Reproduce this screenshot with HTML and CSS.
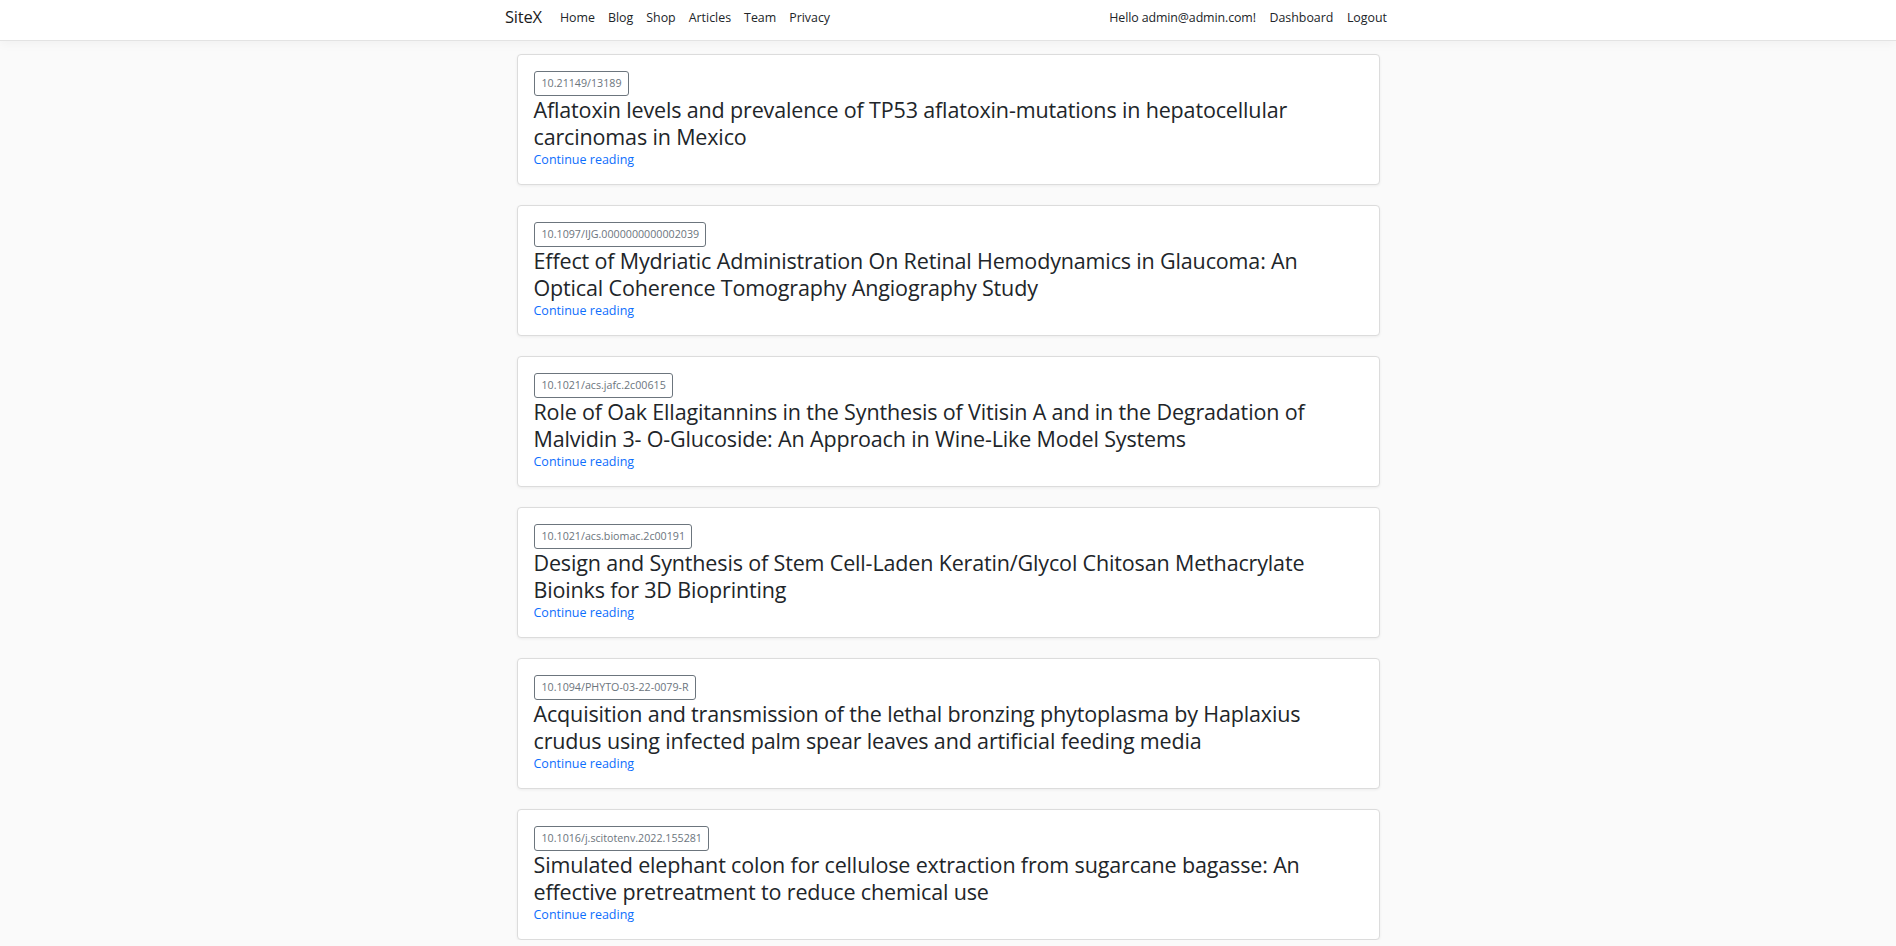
FILE: index.html
```html
<!DOCTYPE html>
<html lang="en">
<head>
<meta charset="utf-8">
<title>SiteX</title>
<link rel="stylesheet" href="styles.css">
</head>
<body>
<header class="navbar">
  <div class="nav-container">
    <a class="brand" href="#">SiteX</a>
    <ul class="nav-links">
      <li><a href="#">Home</a></li>
      <li><a href="#">Blog</a></li>
      <li><a href="#">Shop</a></li>
      <li><a href="#">Articles</a></li>
      <li><a href="#">Team</a></li>
      <li><a href="#">Privacy</a></li>
    </ul>
    <ul class="nav-user">
      <li><span class="hello">Hello admin@admin.com!</span></li>
      <li><a href="#">Dashboard</a></li>
      <li><a href="#">Logout</a></li>
    </ul>
  </div>
</header>
<main class="content">
  <article class="card">
    <span class="doi">10.21149/13189</span>
    <h3 class="title">Aflatoxin levels and prevalence of TP53 aflatoxin-mutations in hepatocellular carcinomas in Mexico</h3>
    <a class="more" href="#">Continue reading</a>
  </article>
  <article class="card">
    <span class="doi">10.1097/IJG.0000000000002039</span>
    <h3 class="title">Effect of Mydriatic Administration On Retinal Hemodynamics in Glaucoma: An Optical Coherence Tomography Angiography Study</h3>
    <a class="more" href="#">Continue reading</a>
  </article>
  <article class="card">
    <span class="doi">10.1021/acs.jafc.2c00615</span>
    <h3 class="title">Role of Oak Ellagitannins in the Synthesis of Vitisin A and in the Degradation of Malvidin 3- O-Glucoside: An Approach in Wine-Like Model Systems</h3>
    <a class="more" href="#">Continue reading</a>
  </article>
  <article class="card">
    <span class="doi">10.1021/acs.biomac.2c00191</span>
    <h3 class="title">Design and Synthesis of Stem Cell-Laden Keratin/Glycol Chitosan Methacrylate Bioinks for 3D Bioprinting</h3>
    <a class="more" href="#">Continue reading</a>
  </article>
  <article class="card">
    <span class="doi">10.1094/PHYTO-03-22-0079-R</span>
    <h3 class="title">Acquisition and transmission of the lethal bronzing phytoplasma by Haplaxius crudus using infected palm spear leaves and artificial feeding media</h3>
    <a class="more" href="#">Continue reading</a>
  </article>
  <article class="card">
    <span class="doi">10.1016/j.scitotenv.2022.155281</span>
    <h3 class="title">Simulated elephant colon for cellulose extraction from sugarcane bagasse: An effective pretreatment to reduce chemical use</h3>
    <a class="more" href="#">Continue reading</a>
  </article>
</main>
</body>
</html>
```

FILE: styles.css
```css
* { box-sizing: border-box; }

html, body {
  margin: 0;
  padding: 0;
}

body {
  background: #fafafa;
  color: #212529;
  font-family: "Open Sans", "Noto Sans", "Liberation Sans", sans-serif;
  overflow: hidden;
}

a { text-decoration: none; }

.navbar {
  background: #fff;
  height: 41px;
  border-bottom: 1px solid #e3e3e3;
  box-shadow: 0 3px 10px rgba(0, 0, 0, 0.04);
}

.nav-container {
  width: 908px;
  margin: 0 auto;
  padding: 0 15px 6px 11px;
  height: 40px;
  display: flex;
  align-items: center;
}

.brand {
  font-size: 16.5px;
  color: #1c1c1c;
  margin-right: 18px;
  line-height: 1;
  letter-spacing: -0.2px;
}

.nav-links, .nav-user {
  list-style: none;
  margin: 0;
  padding: 0;
  display: flex;
  align-items: center;
  gap: 13px;
  font-size: 12.4px;
}

.nav-links a, .nav-user a, .hello {
  color: #212529;
}

.nav-user {
  margin-left: auto;
  gap: 13.5px;
}

.hello {
  letter-spacing: -0.1px;
}

.content {
  width: 863px;
  margin: 13px auto 0;
  display: flex;
  flex-direction: column;
  gap: 20px;
}

.card {
  background: #fff;
  border: 1px solid #dcdcdc;
  border-radius: 4px;
  box-shadow: 0 1px 3px rgba(0, 0, 0, 0.06);
  padding: 16px;
  display: flex;
  flex-direction: column;
  align-items: flex-start;
  height: 131px;
}

.doi {
  display: inline-block;
  border: 1px solid #6c757d;
  border-radius: 3px;
  color: #6c757d;
  font-size: 10.7px;
  line-height: 17px;
  padding: 3px 6px 3px 7px;
}

.title {
  margin: 0;
  font-weight: 400;
  font-size: 21.5px;
  letter-spacing: -0.15px;
  line-height: 27px;
  color: #212529;
}

.more {
  color: #0d6efd;
  font-size: 12.5px;
  line-height: 20px;
}
```
